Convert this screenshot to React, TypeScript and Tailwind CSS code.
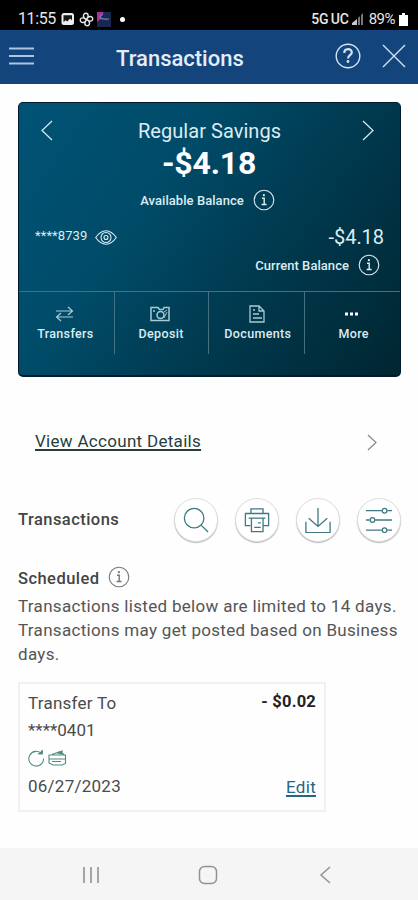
import React from 'react';

type IconProps = { className?: string; children?: React.ReactNode; box?: string; sw?: number };

function Icon({ className = '', children, box = '0 0 24 24', sw = 1.2 }: IconProps) {
  return (
    <svg viewBox={box} className={`shrink-0 ${className}`} fill="none" stroke="currentColor" strokeWidth={sw}>
      {children}
    </svg>
  );
}

function Info({ className = '' }: { className?: string }) {
  return (
    <Icon className={`h-[22px] w-[22px] ${className}`} box="0 0 22 22" sw={1.1}>
      <circle cx="11" cy="11" r="9.8" />
      <path d="M9 9.2h2.2v6.2M8.6 15.5h5" strokeWidth="1.4" />
      <circle cx="10.9" cy="6.2" r="1.1" fill="currentColor" stroke="none" />
    </Icon>
  );
}

function StatusBar() {
  return (
    <div className="flex h-[30px] items-center bg-black pl-[18px] pr-[10px] pt-[8px] text-[#e6e6e6]">
      <span className="w-[43px] text-[16px] leading-5 tracking-[-0.4px]">11:55</span>
      <svg viewBox="0 0 14 14" className="h-[14px] w-[14px]">
        <rect x="0.5" y="1" width="12.5" height="12" rx="2.5" fill="#eee" />
        <path d="M2.5 3.2h8.5v5L9 6.5 6.3 9.6 4.5 8.2l-2 2z" fill="#171717" />
      </svg>
      <Icon className="ml-[4px] h-[15px] w-[15px]" box="0 0 15 15" sw={1.4}>
        <path d="M7.5 7.5C3 6 4 1 7 1.3c3 .3 2.5 3.5.5 6.2M7.5 7.5C9 3 14 4 13.7 7c-.3 3-3.5 2.5-6.2.5M7.5 7.5c4.5 1.5 3.5 6.5.5 6.2-3-.3-2.5-3.5-.5-6.2M7.5 7.5C6 12 1 11 1.3 8c.3-3 3.5-2.5 6.2-.5" />
      </Icon>
      <svg viewBox="0 0 15 15" className="ml-[3px] h-[15px] w-[15px]">
        <rect width="14" height="15" fill="#182850" />
        <path d="M0 0h7L4 4l0 3-4 3z" fill="#b52aa1" />
        <path d="M6 2C1 5 3 8 12 7" fill="none" stroke="#7088b8" strokeWidth="1.2" />
      </svg>
      <span className="ml-[8px] h-[5px] w-[5px] rounded-full bg-white" />
      <span className="ml-auto text-[14px] font-medium leading-5 tracking-[-0.2px] [word-spacing:-1px]">5G UC</span>
      <svg viewBox="0 0 12 12" className="ml-[3px] h-[12px] w-[12px]">
        <path d="M0 12v-2l5-4v6z" fill="#c8c8c8" />
        <path d="M6 12V5l2-2v9zM9 12V2l2-2v12z" fill="#777" />
      </svg>
      <span className="ml-[5px] text-[15px] leading-5 tracking-[-0.5px]">89%</span>
      <svg viewBox="0 0 9 13" className="ml-[4px] h-[13px] w-[9px]">
        <path d="M3 0h3v2h3v11H0V2h3z" fill="#fff" />
      </svg>
    </div>
  );
}

function Header() {
  return (
    <div className="flex h-[54px] items-center bg-[#13447b] pl-[9px] pr-[12px] text-[#d3e3f2]">
      <Icon className="h-[20px] w-[25px] text-[#a9c6e2]" box="0 0 25 20" sw={1.8}>
        <path d="M0 1.5h25M0 9h25M0 16.5h25" />
      </Icon>
      <span className="ml-[82px] mt-[4px] whitespace-nowrap text-[22px] font-medium leading-7 text-[#e3edf7]">Transactions</span>
      <Icon className="ml-auto mt-[-2px] h-[26px] w-[26px]" box="0 0 26 26" sw={1.4}>
        <circle cx="13" cy="13" r="11.8" />
        <path d="M9.3 10c0-5 7.5-5 7.5-.6 0 2.5-3.8 3-3.8 6" strokeWidth="2.2" />
        <circle cx="13" cy="18.5" r="1.4" fill="currentColor" stroke="none" />
      </Icon>
      <Icon className="ml-[21px] mt-[-2px] h-[24px] w-[24px]" sw={1.4}>
        <path d="M1 1l22 22M23 1L1 23" />
      </Icon>
    </div>
  );
}

function Action({ label, children, className = '' }: { label: string; children: React.ReactNode; className?: string }) {
  return (
    <div className={`flex h-[62px] flex-1 flex-col items-center border-[#44717f] pt-[12px] ${className}`}>
      <div className="flex h-[20px] items-center text-[#a9c9d4]">{children}</div>
      <span className="mt-[2px] text-[12.5px] font-medium leading-4 tracking-[0.35px] text-[#dcebf0]">{label}</span>
    </div>
  );
}

function AccountCard() {
  return (
    <div className="ml-[18px] mt-[18px] h-[275px] w-[383px] overflow-hidden rounded-[5px] border border-b-2 border-[#001b2d] bg-linear-[125deg,#005376_0%,#004b68_35%,#003b51_60%,#002631_100%] text-[#dcecf2]">
      <div className="flex h-[55px] items-center justify-between px-[21px]">
        <Icon className="h-[21px] w-[14px]" box="0 0 14 21"><path d="M12 1L2 10.5 12 20" /></Icon>
        <span className="ml-[4px] mt-[1px] text-[20px] leading-6 tracking-[0.05px]">Regular Savings</span>
        <Icon className="mr-[4px] h-[21px] w-[14px]" box="0 0 14 21"><path d="M2 1l10 9.5L2 20" /></Icon>
      </div>
      <div className="h-[30px] pr-[1px] text-center text-[32px] font-bold leading-[10px] tracking-[-0.2px] text-white">-$4.18</div>
      <div className="flex h-[25px] items-center justify-center pr-[4px]">
        <span className="text-[13px] font-medium leading-5 tracking-[0.06px]">Available Balance</span>
        <Info className="ml-[9px] mt-[-2px]" />
      </div>
      <div className="mt-[11px] flex h-[26px] items-center pl-[16px] pr-[16px]">
        <span className="mt-[-2px] text-[13px] leading-5 tracking-[0.1px]">****8739</span>
        <Icon className="ml-[8px] h-[17px] w-[22px]" box="0 0 22 17" sw={1.1}>
          <path d="M.7 8.5C7-.5 15-.5 21.3 8.5 15 17.5 7 17.5.7 8.5z" /><circle cx="11" cy="8.5" r="5" /><circle cx="11" cy="8.5" r="2" />
        </Icon>
        <span className="ml-auto mt-[-1px] text-[20px] leading-6 tracking-[-0.05px]">-$4.18</span>
      </div>
      <div className="mt-[4px] flex h-[24px] items-center justify-end pr-[20px]">
        <span className="text-[13px] font-medium leading-5 tracking-[0.05px]">Current Balance</span>
        <Info className="ml-[9px] mt-[-2px]" />
      </div>
      <div className="mt-[13px] flex border-t border-[#44717f]">
        <Action label="Transfers" className="border-r pr-[2px]">
          <Icon className="mr-[1px] h-[16px] w-[19px]" box="0 0 19 16"><path d="M1 5h16M13 1l4.5 4-4.5 4M18 11H2M6 7l-4.5 4L6 15" /></Icon>
        </Action>
        <Action label="Deposit" className="border-r">
          <Icon className="mr-[3px] h-[16px] w-[20px]" box="0 0 20 16" sw={1.5}><path d="M1 1.5h7l1.5 2H13l1-2h5v13H1zM3 5h2" /><circle cx="10.5" cy="9" r="3.5" /><path d="M14 6l3-2M14 12l3-6" strokeWidth="1" /></Icon>
        </Action>
        <Action label="Documents" className="border-r pl-[3px]">
          <Icon className="mr-[2px] h-[18px] w-[16px]" box="0 0 16 18" sw={1.3}><path d="M1 1h9l5 5v11H1zM10 1v5h5M4 5h2M4 9h6M4 13h9" /></Icon>
        </Action>
        <Action label="More" className="pl-[2px]">
          <svg className="mr-[3px] h-[4px] w-[14px]" viewBox="0 0 14 4" fill="#fff"><path d="M0 .5h3v3H0zM5 .5h3v3H5zM10 .5h3v3h-3z" /></svg>
        </Action>
      </div>
    </div>
  );
}

function Round({ children }: { children: React.ReactNode }) {
  return (
    <div className="flex h-[44px] w-[44px] items-center justify-center rounded-full border border-[#dedede] bg-white text-[#3f7983] shadow-[0_1px_1px_#b8b8b8]">
      <Icon className="h-[26px] w-[26px]" box="0 0 28 28" sw={1.4}>{children}</Icon>
    </div>
  );
}

export default function App() {
  return (
    <div className="flex h-[900px] w-[418px] flex-col overflow-hidden bg-[#fefefe] font-['Roboto',sans-serif] text-[#444]">
      <StatusBar />
      <Header />
      <AccountCard />
      <div className="mt-[52px] flex h-[26px] items-center pl-[35px] pr-[41px]">
        <span className="mt-[-2px] text-[17px] leading-6 tracking-[0.3px] text-[#263e3e] underline decoration-[1.5px] underline-offset-[2px]">View Account Details</span>
        <Icon className="ml-auto h-[17px] w-[10px] text-[#888]" box="0 0 10 17"><path d="M1 1l8 7.5L1 16" /></Icon>
      </div>
      <div className="mt-[42px] flex h-[46px] items-center pl-[18px] pr-[17px]">
        <span className="mr-auto text-[16.5px] font-medium leading-6 tracking-[0.45px]">Transactions</span>
        <div className="flex gap-[17px]">
          <Round><circle cx="12" cy="12" r="10.5" /><path d="M19.5 19.5l7.5 7.5" /></Round>
          <Round><path d="M7.5 7V2h13v5M7 20H1.500V7h25v13H21M5 12h18M8 12v14.500h12.500V12M15 17h3M11 22h7" /></Round>
          <Round><path d="M14 1v20M4 12l10 9 10-9M1 16v11.500h26V16" /></Round>
          <Round><path d="M0 4h17M23 4h5M0 14h4M10 14h18M0 25h17M23 25h5" /><circle cx="20" cy="4" r="2.500" /><circle cx="7" cy="14" r="2.500" /><circle cx="20" cy="25" r="2.500" /></Round>
        </div>
      </div>
      <div className="mt-[22px] flex h-[24px] items-center pl-[18px]">
        <span className="mt-[3px] text-[16.5px] font-medium leading-6 tracking-[0.45px]">Scheduled</span>
        <Info className="ml-[9px] mt-[-1px] text-[#777]" />
      </div>
      <p className="mt-[5px] w-[400px] whitespace-nowrap pl-[18px] text-[17px] leading-[24px] tracking-[0.31px] text-[#555]">
        Transactions listed below are limited to 14 days.<br />Transactions may get posted based on Business<br />days.
      </p>
      <div className="ml-[18px] mt-[16px] flex h-[130px] w-[308px] justify-between border-2 border-[#f0f0f0] pl-[8px] pr-[8px] pt-[6px] text-[17px] leading-[27px] text-[#4b4b4b]">
        <div className="flex flex-col">
          <span className="tracking-[0.25px]">Transfer To</span>
          <span>****0401</span>
          <div className="flex h-[29px] items-center gap-[3px] text-[#4f8a80]">
            <Icon className="mt-[-1px] h-[17px] w-[17px]" box="0 0 18 18" sw={1.1}><path d="M14.500 4A7.800 7.800 0 1 0 16.500 9M11 4h4V0" /><path d="M11.500 4l3.500-3v3z" fill="currentColor" /></Icon>
            <Icon className="mt-[-1px] h-[16px] w-[19px]" box="0 0 19 16" sw={1.1}><path d="M1 5h16.500v8.500L14 15H5l-4-2zM4 4.500l8-3 4 3M1 9h16M4 11.500h9" /><path d="M10 3l4-2v3z" fill="currentColor" /></Icon>
          </div>
          <span className="tracking-[0.25px]">06/27/2023</span>
        </div>
        <div className="flex flex-col items-end justify-between pb-[9px]">
          <span className="mt-[-2px] text-[16.5px] font-bold tracking-[0.2px] text-[#222]">- $0.02</span>
          <span className="text-[17px] tracking-[0.3px] text-[#24677e] underline decoration-[1.5px] underline-offset-[2px]">Edit</span>
        </div>
      </div>
      <div className="mt-auto flex h-[52px] items-center bg-[#f5f5f5] pl-[82px] text-[#929292]">
        <Icon className="mt-[2px] h-[18px] w-[18px]" box="0 0 18 18" sw={1.6}><path d="M2 1v16M9 1v16M16 1v16" /></Icon>
        <Icon className="ml-[98px] mt-[2px] h-[20px] w-[20px]" box="0 0 20 20" sw={1.5}><rect x="1.5" y="1.5" width="17" height="17" rx="5" /></Icon>
        <Icon className="ml-[101px] mt-[2px] h-[18px] w-[12px]" box="0 0 12 18" sw={1.5}><path d="M11 1L2 9l9 8" /></Icon>
      </div>
    </div>
  );
}
